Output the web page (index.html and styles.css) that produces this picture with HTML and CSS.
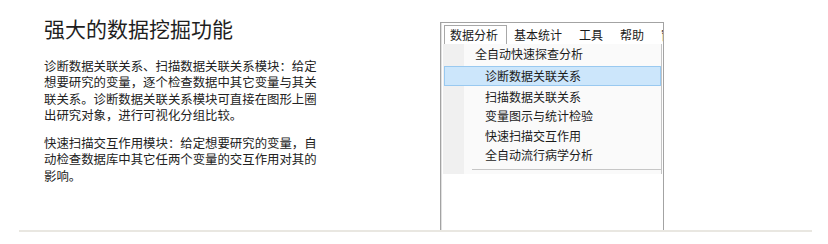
FILE: index.html
```html
<!DOCTYPE html>
<html lang="zh-CN">
<head>
<meta charset="utf-8">
<link rel="stylesheet" href="styles.css">
</head>
<body>
<div class="row">
  <div class="text">
    <h1 class="title">强大的数据挖掘功能</h1>
    <p class="para">诊断数据关联关系、扫描数据关联关系模块：给定想要研究的变量，逐个检查数据中其它变量与其关联关系。诊断数据关联关系模块可直接在图形上圈出研究对象，进行可视化分组比较。</p>
    <p class="para para2">快速扫描交互作用模块：给定想要研究的变量，自动检查数据库中其它任两个变量的交互作用对其的影响。</p>
  </div>
  <div class="shot">
    <div class="menubar">
      <span class="tab">数据分析</span>
      <span class="mi mi-first">基本统计</span>
      <span class="mi">工具</span>
      <span class="mi">帮助</span>
      <span class="mi">窗口</span>
    </div>
    <div class="dd">
      <div class="it it-top">全自动快速探查分析</div>
      <div class="it hl">诊断数据关联关系</div>
      <div class="it">扫描数据关联关系</div>
      <div class="it">变量图示与统计检验</div>
      <div class="it">快速扫描交互作用</div>
      <div class="it">全自动流行病学分析</div>
      <div class="dd-foot"></div>
    </div>
  </div>
</div>
<div class="rule"></div>
</body>
</html>
```
FILE: styles.css
```css
html, body {
  margin: 0;
  padding: 0;
  background: #ffffff;
}
body {
  width: 828px;
  height: 244px;
  overflow: hidden;
  font-family: "Noto Sans CJK SC", "Noto Sans", sans-serif;
}
.row {
  display: flex;
  align-items: flex-start;
  padding-left: 44px;
}
.text {
  width: 277px;
  padding-top: 14px;
  color: #222;
}
.title {
  margin: 0;
  font-size: 21px;
  line-height: 28px;
  font-weight: 400;
  color: #1e1e1e;
}
.para {
  margin: 16px 0 0 0;
  font-size: 12.4px;
  line-height: 16.4px;
  color: #222;
}
.para2 {
  margin-top: 11.4px;
}
.shot {
  margin-left: 119px;
  margin-top: 22px;
  width: 222px;
  height: 207px;
  border: 1px solid #a3a3a3;
  border-bottom: 0;
  box-shadow: inset 1px 0 0 #e0e0e0;
  background: #fff;
  overflow: hidden;
}
.menubar {
  height: 21px;
  display: flex;
  align-items: flex-start;
  white-space: nowrap;
  overflow: hidden;
  font-size: 12px;
  color: #1a1a1a;
}
.tab {
  margin-top: 2px;
  margin-left: 3px;
  height: 18px;
  line-height: 17px;
  padding: 0 8px 0 5px;
  border: 1px solid #a8a8a8;
  border-bottom: 0;
  background: #fff;
}
.mi {
  margin-left: 17px;
  margin-top: 3px;
  line-height: 17px;
}
.mi-first {
  margin-left: 7px;
}
.dd {
  margin-left: 2px;
  width: 218px;
  border-right: 1px solid #c4c4c4;
  background: linear-gradient(to right, #f0f0f0 0, #f0f0f0 21px, #fafafa 21px);
  font-size: 12px;
  color: #1a1a1a;
  padding-bottom: 4px;
}
.it {
  height: 19.5px;
  line-height: 19.5px;
  padding-left: 42px;
  white-space: nowrap;
}
.it-top {
  height: 22px;
  line-height: 20px;
  padding-left: 32px;
}
.hl {
  margin-left: 1px;
  padding-left: 40px;
  height: 18px;
  line-height: 18px;
  border: 1px solid #99c9f0;
  background: #cce6fb;
  margin-bottom: 0.5px;
}
.dd-foot {
  margin-top: 4px;
  margin-left: 29px;
  height: 1px;
  background: #c6c6c6;
}
.rule {
  margin-left: 19px;
  width: 793px;
  height: 2px;
  background: #e9e7e1;
}
```
